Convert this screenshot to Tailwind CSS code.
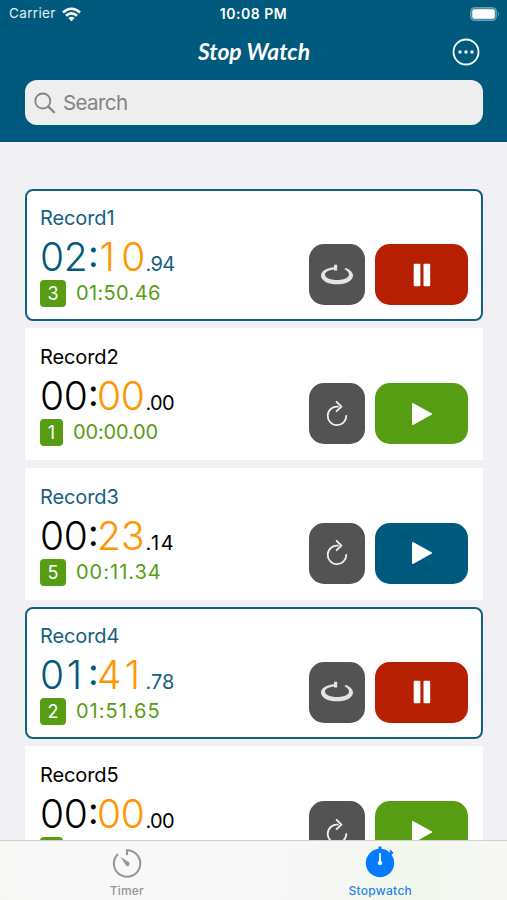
<!DOCTYPE html>
<html lang="en">
<head>
<meta charset="utf-8">
<title>Stop Watch</title>
<script src="https://cdn.jsdelivr.net/npm/@tailwindcss/browser@4"></script>
</head>
<body class="w-[507px] h-[900px] overflow-hidden bg-[#f0f0f5] font-['Inter','Liberation_Sans',sans-serif]">
<svg class="hidden">
  <symbol id="redo" viewBox="0 0 24 28"><path d="M13 6.6A9.3 9.3 0 1 0 21.3 16M11.6 1.8L16.4 6.6L11.6 11.2" fill="none" stroke="#f2f2f2" stroke-width="1.8" stroke-linecap="round" stroke-linejoin="round"/></symbol>
  <symbol id="lap" viewBox="0 0 34 22"><path fill="#e4e4e4" d="M14 3.200C6.500 3.800 1 7 1 11.400C1 16.600 8 20.300 17 20.300S33 16.600 33 11.400C33 8.300 30 5.300 25.400 3.900L24.600 5.200C27.600 6.700 29 8.500 29 10.400C29 13.800 23.500 15.900 17 15.900S5 13.800 5 10.400C5 7.800 8.500 6 14 5.400V6.600H17.200V.7H14Z"/></symbol>
  <symbol id="pause" viewBox="0 0 18 24"><rect x="0.700" y="0.700" width="6.700" height="22.600" rx="1" fill="#fff"/><rect x="10.500" y="0.700" width="6.700" height="22.600" rx="1" fill="#fff"/></symbol>
  <symbol id="play" viewBox="0 0 22 24"><path d="M2 2L20 12L2 22Z" fill="#fff" stroke="#fff" stroke-width="2" stroke-linejoin="round"/></symbol>
</svg>
<div class="relative flex h-[900px] flex-col">
  <header class="h-[142px] shrink-0 bg-[#005a7e] text-white">
    <div class="grid h-[28px] grid-cols-3 items-center pl-[9px] pr-[7px] text-[13.500px] leading-none">
      <div class="flex items-center gap-[6px] text-white/90"><span class="w-[47px] tracking-[0.350px]">Carrier</span>
        <svg class="h-[15px] w-[19px]" viewBox="0 0 19 15" fill="none" stroke="#fff" stroke-width="2.500"><path d="M1 5.500Q9.500-2 18 5.500M4 8.800Q9.500 3.900 15 8.800"/><path d="M6.300 11L9.500 14.200L12.700 11Q9.500 8.300 6.300 11Z" fill="#fff" stroke="none"/></svg>
      </div>
      <div class="pr-[2px] text-center text-[14px] font-semibold tracking-[0.500px] whitespace-nowrap">10:08 PM</div>
      <svg class="h-[14px] w-[30px] justify-self-end" viewBox="0 0 30 14"><rect x=".5" y=".5" width="26" height="13" rx="4" fill="#4c8ba4" stroke="#6c9fb4"/><rect x="2.300" y="2.300" width="22.500" height="9.500" rx="2.200" fill="#fff"/><path d="M28 4.500Q30 7 28 9.500Z" fill="#6c9fb4"/></svg>
    </div>
    <div class="relative flex h-[48px] items-center justify-center">
      <h1 class="text-center"><svg class="h-[34px] w-[120px]" viewBox="0 0 120 34"><text x="4" y="25" textLength="112" lengthAdjust="spacingAndGlyphs" fill="#fff" class="font-['Lato','Open_Sans',sans-serif] text-[23px] font-bold italic">Stop Watch</text></svg></h1>
      <svg class="absolute top-[10px] right-[27px] h-[28px] w-[28px]" viewBox="0 0 28 28"><circle cx="14" cy="14" r="12.500" fill="none" stroke="#fff" stroke-width="1.800"/><circle cx="8" cy="14" r="1.700" fill="#fff"/><circle cx="14" cy="14" r="1.700" fill="#fff"/><circle cx="20" cy="14" r="1.700" fill="#fff"/></svg>
    </div>
    <div class="mt-[4px] ml-[25px] flex h-[45px] w-[458px] items-center gap-[7px] rounded-[12px] bg-[#eeeeef] pl-[9px] text-[#838386]">
      <svg class="h-[22px] w-[22px]" viewBox="0 0 22 22" fill="none" stroke="#838386" stroke-width="1.800" stroke-linecap="round"><circle cx="8.800" cy="9" r="7.500"/><path d="M14.400 14.600L20 20.200" stroke-width="2.200"/></svg>
      <span class="mt-[1px] text-[20.500px] leading-none tracking-[-0.600px]">Search</span>
    </div>
  </header>

  <main class="flex min-h-0 grow flex-col gap-[7.300px] overflow-hidden pt-[47px] pl-[25px]">
    <article class="flex h-[132px] w-[458px] shrink-0 justify-between rounded-[8px] border-2 border-[#146080] bg-white pt-[13px] pr-[13px] pb-[14px] pl-[13px] text-[#146080]">
      <div>
        <h2 class="mt-[2px] text-[20px] leading-[24px] tracking-[-0.100px]">Record1</h2>
        <div class="mt-[5px] flex h-[44px] items-baseline leading-[44px]"><span class="w-[48px] text-[39px] font-[350] tracking-[-0.300px] text-[#005a7e]">02</span><span class="relative -top-[4px] w-[9px] text-center text-[37px] text-[#005a7e]">:</span><span class="grid w-[48.500px] grid-cols-2 text-center text-[39px] font-[350] text-[#ff9500]"><span class="pr-[4px]">1</span><span>0</span></span><span class="text-[20px] tracking-[-0.700px]">.94</span></div>
        <div class="mt-[1px] flex items-center gap-[10px] text-[20px] leading-[27px] text-[#579d14]"><span class="flex h-[27px] w-[26px] items-center justify-center rounded-[4px] bg-[#579d14] text-[18px] text-white">3</span><span class="tracking-[0.350px]">01:50.46</span></div>
      </div>
      <div class="flex gap-[10px] self-end">
        <button class="flex h-[61px] w-[56px] items-center justify-center rounded-[15px] bg-[#535353]"><svg class="h-[22px] w-[34px]"><use href="#lap"/></svg></button>
        <button class="flex h-[61px] w-[93px] items-center justify-center rounded-[15px] bg-[#b71f02]"><svg class="h-[24px] w-[18px]"><use href="#pause"/></svg></button>
      </div>
    </article>

    <article class="flex h-[132px] w-[458px] shrink-0 justify-between bg-white pt-[15px] pr-[15px] pb-[16px] pl-[15px] text-black">
      <div>
        <h2 class="mt-[2px] text-[20px] leading-[24px] tracking-[-0.100px]">Record2</h2>
        <div class="mt-[5px] flex h-[44px] items-baseline leading-[44px]"><span class="w-[48px] text-[39px] font-[350] tracking-[-0.300px]">00</span><span class="relative -top-[4px] w-[9px] text-center text-[37px]">:</span><span class="w-[48.500px] text-[39px] font-[350] tracking-[-0.300px] text-[#ff9500]">00</span><span class="text-[20px] tracking-[-0.700px]">.00</span></div>
        <div class="mt-[1px] flex items-center gap-[10px] text-[20px] leading-[27px] text-[#579d14]"><span class="flex h-[27px] w-[23px] items-center justify-center rounded-[4px] bg-[#579d14] text-[18px] text-white">1</span><span class="tracking-[-0.150px]">00:00.00</span></div>
      </div>
      <div class="flex gap-[10px] self-end">
        <button class="flex h-[61px] w-[56px] items-center justify-center rounded-[15px] bg-[#535353]"><svg class="h-[28px] w-[24px]"><use href="#redo"/></svg></button>
        <button class="flex h-[61px] w-[93px] items-center justify-center rounded-[15px] bg-[#579d14]"><svg class="h-[24px] w-[22px]"><use href="#play"/></svg></button>
      </div>
    </article>

    <article class="flex h-[132px] w-[458px] shrink-0 justify-between bg-white pt-[15px] pr-[15px] pb-[16px] pl-[15px] text-black">
      <div>
        <h2 class="mt-[2px] text-[20px] leading-[24px] tracking-[-0.100px] text-[#146080]">Record3</h2>
        <div class="mt-[5px] flex h-[44px] items-baseline leading-[44px]"><span class="w-[48px] text-[39px] font-[350] tracking-[-0.300px]">00</span><span class="relative -top-[4px] w-[9px] text-center text-[37px]">:</span><span class="w-[48.500px] text-[39px] font-[350] text-[#ff9500]">23</span><span class="text-[20px] tracking-[1.500px]">.14</span></div>
        <div class="mt-[1px] flex items-center gap-[10px] text-[20px] leading-[27px] text-[#579d14]"><span class="flex h-[27px] w-[26px] items-center justify-center rounded-[4px] bg-[#579d14] text-[18px] text-white">5</span><span class="tracking-[1px]">00:11.34</span></div>
      </div>
      <div class="flex gap-[10px] self-end">
        <button class="flex h-[61px] w-[56px] items-center justify-center rounded-[15px] bg-[#535353]"><svg class="h-[28px] w-[24px]"><use href="#redo"/></svg></button>
        <button class="flex h-[61px] w-[93px] items-center justify-center rounded-[15px] bg-[#005a7e]"><svg class="h-[24px] w-[22px]"><use href="#play"/></svg></button>
      </div>
    </article>

    <article class="flex h-[132px] w-[458px] shrink-0 justify-between rounded-[8px] border-2 border-[#146080] bg-white pt-[13px] pr-[13px] pb-[14px] pl-[13px] text-[#146080]">
      <div>
        <h2 class="mt-[2px] text-[20px] leading-[24px] tracking-[-0.100px]">Record4</h2>
        <div class="mt-[5px] flex h-[44px] items-baseline leading-[44px]"><span class="grid w-[48px] grid-cols-2 text-center text-[39px] font-[350] text-[#005a7e]"><span>0</span><span class="pr-[3px]">1</span></span><span class="relative -top-[4px] w-[9px] text-center text-[37px] text-[#005a7e]">:</span><span class="grid w-[48.500px] grid-cols-2 text-center text-[39px] font-[350] text-[#ff9500]"><span>4</span><span class="pr-[2px]">1</span></span><span class="text-[20px]">.78</span></div>
        <div class="mt-[1px] flex items-center gap-[10px] text-[20px] leading-[27px] text-[#579d14]"><span class="flex h-[27px] w-[26px] items-center justify-center rounded-[4px] bg-[#579d14] text-[18px] text-white">2</span><span class="tracking-[1px]">01:51.65</span></div>
      </div>
      <div class="flex gap-[10px] self-end">
        <button class="flex h-[61px] w-[56px] items-center justify-center rounded-[15px] bg-[#535353]"><svg class="h-[22px] w-[34px]"><use href="#lap"/></svg></button>
        <button class="flex h-[61px] w-[93px] items-center justify-center rounded-[15px] bg-[#b71f02]"><svg class="h-[24px] w-[18px]"><use href="#pause"/></svg></button>
      </div>
    </article>

    <article class="flex h-[132px] w-[458px] shrink-0 justify-between bg-white pt-[15px] pr-[15px] pb-[16px] pl-[15px] text-black">
      <div>
        <h2 class="mt-[2px] text-[20px] leading-[24px] tracking-[-0.100px]">Record5</h2>
        <div class="mt-[5px] flex h-[44px] items-baseline leading-[44px]"><span class="w-[48px] text-[39px] font-[350] tracking-[-0.300px]">00</span><span class="relative -top-[4px] w-[9px] text-center text-[37px]">:</span><span class="w-[48.500px] text-[39px] font-[350] tracking-[-0.300px] text-[#ff9500]">00</span><span class="text-[20px] tracking-[-0.700px]">.00</span></div>
        <div class="mt-[1px] h-[27px] w-[23px] rounded-[4px] bg-[#579d14]"></div>
      </div>
      <div class="flex gap-[10px] self-end">
        <button class="flex h-[61px] w-[56px] items-center justify-center rounded-[15px] bg-[#535353]"><svg class="h-[28px] w-[24px]"><use href="#redo"/></svg></button>
        <button class="flex h-[61px] w-[93px] items-center justify-center rounded-[15px] bg-[#579d14]"><svg class="h-[24px] w-[22px]"><use href="#play"/></svg></button>
      </div>
    </article>
  </main>

  <nav class="grid h-[60px] shrink-0 grid-cols-2 border-t border-[#d0d0d0] bg-[linear-gradient(90deg,#f7f8f6_0%,#f8f8f8_20%,#f7f7f7_60%,#f2f7ec_82%,#f7f8f6_100%)] text-[12px] leading-none font-medium">
    <a class="flex flex-col items-center pt-[5px] text-[#959595]">
      <svg class="h-[34px] w-[32px]" viewBox="0 0 32 34"><path d="M16 9V4.300A13.200 13.200 0 1 1 7 7.900" fill="none" stroke="#959595" stroke-width="2"/><path d="M9.400 10.700L18.300 16.600A2.300 2.300 0 0 1 15.200 19.800Z" fill="#959595"/></svg>
      <span class="mt-[5px] tracking-[0.200px]">Timer</span>
    </a>
    <a class="flex flex-col items-center pt-[5px] text-[#2884ef]">
      <svg class="h-[34px] w-[32px]" viewBox="0 0 32 34"><circle cx="16" cy="17" r="14.200" fill="#067aff"/><path d="M16 .5V5M25.500 8.500L28 6" stroke="#067aff" stroke-width="3"/><path d="M26 4.300L29 7.300" stroke="#067aff" stroke-width="1.500"/><path d="M16 7V17" stroke="#e9f3ff" stroke-width="2"/><circle cx="16" cy="17" r="2.300" fill="#e9f3ff"/></svg>
      <span class="mt-[5px] tracking-[0.300px]">Stopwatch</span>
    </a>
  </nav>
</div>
</body>
</html>
